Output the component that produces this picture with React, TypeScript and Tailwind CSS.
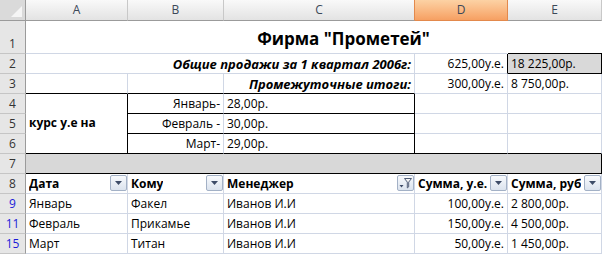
import React from "react";

const base =
  "flex border-r border-b border-[#d0d7e5] px-[3px] pb-[1px] whitespace-nowrap leading-[16px] text-black";
const cell = `${base} items-end`;

function ColHead({ label, active, edge }: { label: string; active?: boolean; edge?: boolean }) {
  if (active) {
    return (
      <div className="flex items-center justify-center border-r border-b border-[#e3894c] bg-linear-to-b from-[#fcd2a4] to-[#f6a062] text-[#3b4858]">
        {label}
      </div>
    );
  }
  return (
    <div
      className={`flex items-center justify-center border-r border-b border-r-[#c8c8c8] border-b-[#9b9b9b] bg-linear-to-b from-[#f9f9f9] to-[#e3e3e3] text-[#3b4858] ${
        edge ? "border-r-[#e3894c]" : ""
      }`}
    >
      {label}
    </div>
  );
}

function RowHead({ n, blue, bottom }: { n: string; blue?: boolean; bottom?: boolean }) {
  return (
    <div
      className={`flex justify-center border-r border-b border-r-[#9b9b9b] border-b-[#c5c5c5] bg-[#e6e6e6] leading-[16px] ${
        bottom ? "items-end pb-[1px]" : "items-center"
      } ${blue ? "text-[#1c1cd8]" : "text-[#333333]"}`}
    >
      {n}
    </div>
  );
}

function Drop({ filter }: { filter?: boolean }) {
  return (
    <div className="ml-auto mb-[1px] flex h-[16px] w-[17px] shrink-0 items-center justify-center rounded-[2px] border border-[#a3b1c6] bg-linear-to-b from-[#f8fafd] to-[#dbe3ee]">
      {filter ? (
        <svg width="13" height="12" viewBox="0 0 13 12">
          <path d="M0.5 8h4L2.5 10.5z" fill="#3d4c68" />
          <path d="M5.5 1.5h7l-2.8 3.6v4.8l-1.4 1V5.1z" fill="#f4f4f4" stroke="#4f5d78" strokeWidth="1" />
        </svg>
      ) : (
        <svg width="7" height="4" viewBox="0 0 7 4">
          <path d="M0 0h7L3.5 4z" fill="#3d4c68" />
        </svg>
      )}
    </div>
  );
}

function Head({ label, filter }: { label: string; filter?: boolean }) {
  return (
    <div className={`${cell} pr-0 font-bold`}>
      <span className="min-w-0 overflow-hidden">{label}</span>
      <Drop filter={filter} />
    </div>
  );
}

const rows = [
  { n: "9", date: "Январь", to: "Факел", usd: "100,00у.е.", rub: "2 800,00р." },
  { n: "11", date: "Февраль", to: "Прикамье", usd: "150,00у.е.", rub: "4 500,00р." },
  { n: "15", date: "Март", to: "Титан", usd: "50,00у.е.", rub: "1 450,00р." },
];

export default function App() {
  return (
    <div className="h-[254px] w-[602px] overflow-hidden bg-white font-['Open_Sans','Noto_Sans',sans-serif] text-[12px]">
      <div className="grid grid-cols-[26px_102px_96px_191px_93px_94px] grid-rows-[21px_33px_repeat(10,20px)]">
        {/* column headers */}
        <div className="relative border-r border-b border-[#9b9b9b] bg-[#dadada]">
          <svg className="absolute right-[3px] bottom-[3px]" width="11" height="11" viewBox="0 0 11 11">
            <path d="M11 0v11H0z" fill="#f5f5f5" />
          </svg>
        </div>
        <ColHead label="A" />
        <ColHead label="B" />
        <ColHead label="C" edge />
        <ColHead label="D" active />
        <ColHead label="E" />

        {/* row 1 */}
        <RowHead n="1" bottom />
        <div className={`${cell} col-span-4 border-r-white justify-center pl-[157px] pb-[3px] text-[17px] leading-[22px] font-bold`}>
          Фирма "Прометей"
        </div>
        <div className="border-b border-black" />

        {/* row 2 */}
        <RowHead n="2" />
        <div className={`${cell} col-span-3 justify-end text-[13px] font-bold italic`}>
          Общие продажи за 1 квартал 2006г:
        </div>
        <div className={`${cell} justify-end border-r-black`}>625,00у.е.</div>
        <div className={`${cell} border-r-black border-b-black bg-[#d9d9d9]`}>18 225,00р.</div>

        {/* row 3 */}
        <RowHead n="3" />
        <div className={`${cell} border-b-black`} />
        <div className={`${cell} border-b-black`} />
        <div className={`${cell} justify-end border-b-black text-[13px] font-bold italic`}>Промежуточные итоги:</div>
        <div className={`${cell} justify-end`}>300,00у.е.</div>
        <div className={cell}>8 750,00р.</div>

        {/* rows 4-6 */}
        <RowHead n="4" />
        <div className={`${base} row-span-3 items-center border-r-black border-b-black pb-0 font-bold`}>курс у.е на</div>
        <div className={`${cell} justify-end border-b-black`}>Январь-</div>
        <div className={`${cell} border-r-black border-b-black`}>28,00р.</div>
        <div className={cell} />
        <div className={cell} />

        <RowHead n="5" />
        <div className={`${cell} justify-end border-b-black`}>Февраль -</div>
        <div className={`${cell} border-r-black border-b-black`}>30,00р.</div>
        <div className={cell} />
        <div className={cell} />

        <RowHead n="6" />
        <div className={`${cell} justify-end border-b-black`}>Март-</div>
        <div className={`${cell} border-r-black border-b-black`}>29,00р.</div>
        <div className={`${cell} border-b-black`} />
        <div className={`${cell} border-b-black`} />

        {/* row 7 */}
        <RowHead n="7" />
        <div className="col-span-5 border-r border-b border-black bg-[#d8d8d8]" />

        {/* row 8 */}
        <RowHead n="8" />
        <Head label="Дата" />
        <Head label="Кому" />
        <Head label="Менеджер" filter />
        <Head label="Сумма, у.е." />
        <Head label="Сумма, руб" />

        {rows.map((r) => (
          <React.Fragment key={r.n}>
            <RowHead n={r.n} blue />
            <div className={cell}>{r.date}</div>
            <div className={cell}>{r.to}</div>
            <div className={cell}>Иванов И.И</div>
            <div className={`${cell} justify-end`}>{r.usd}</div>
            <div className={cell}>{r.rub}</div>
          </React.Fragment>
        ))}
      </div>
    </div>
  );
}
